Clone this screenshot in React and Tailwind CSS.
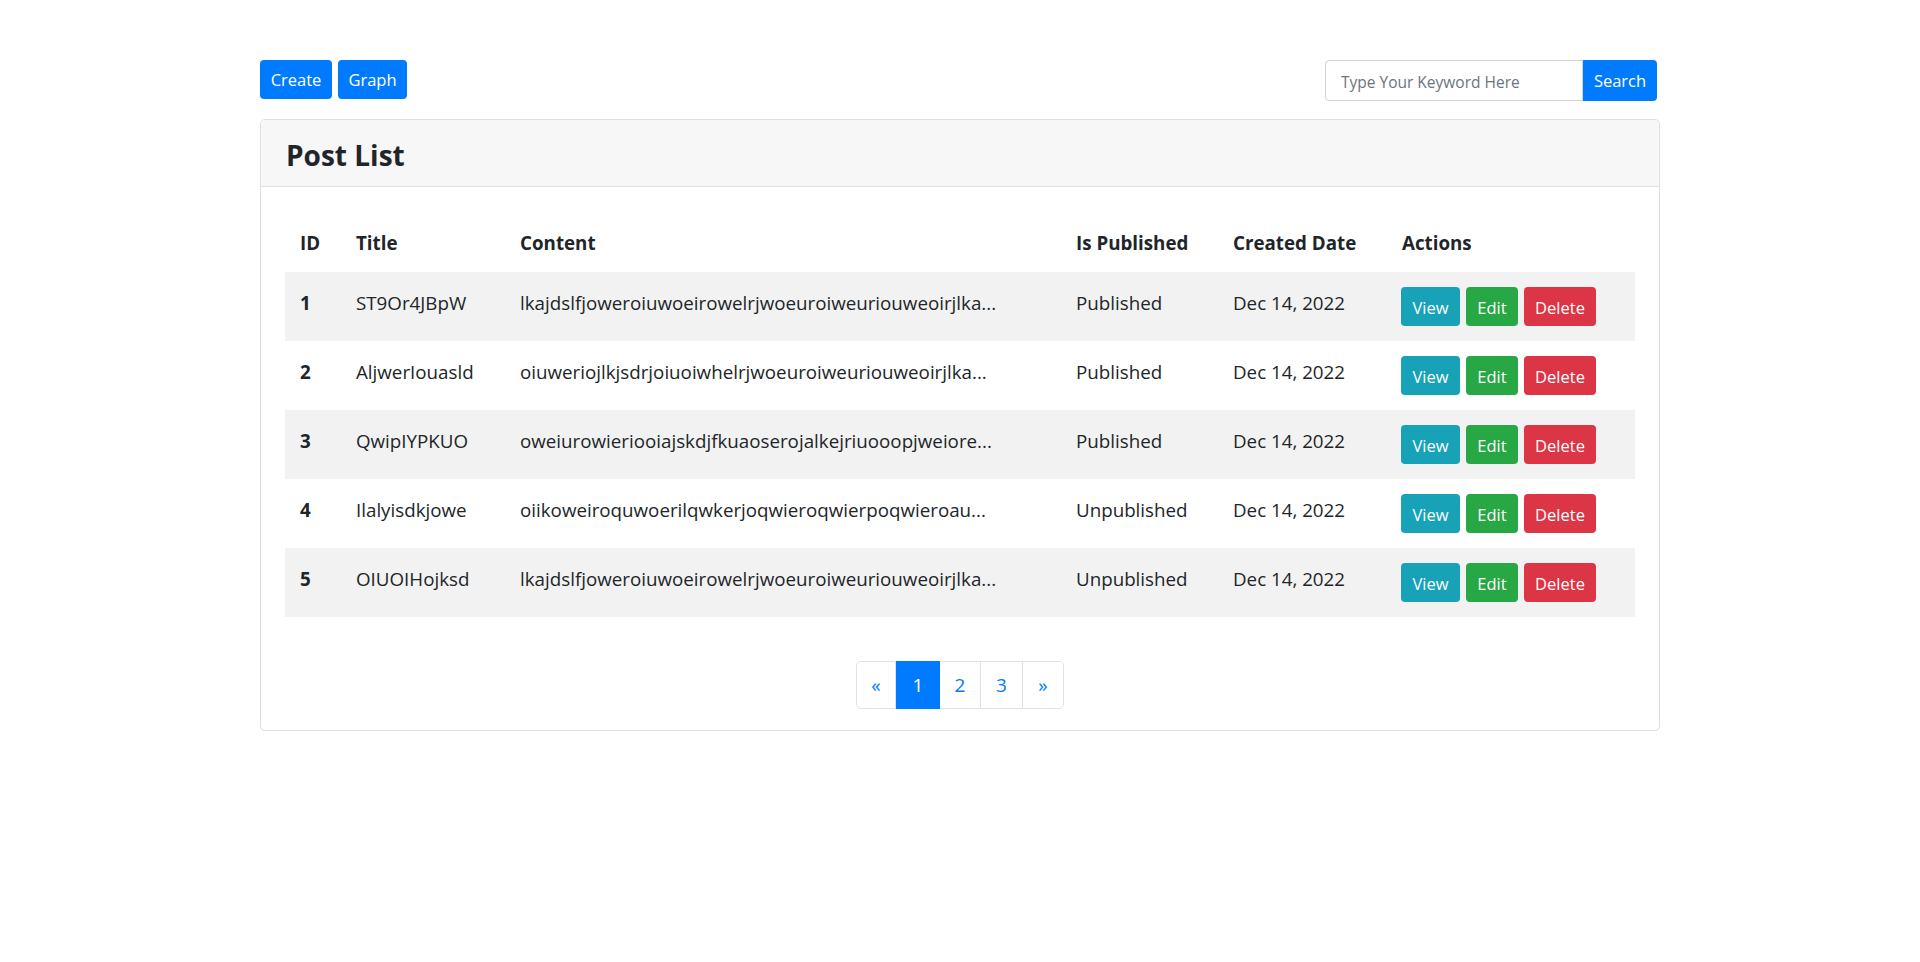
export default function App() {
  const rows = [
    { id: 1, title: "ST9Or4JBpW", content: "lkajdslfjoweroiuwoeirowelrjwoeuroiweuriouweoirjlka...", pub: "Published" },
    { id: 2, title: "AljwerIouasld", content: "oiuweriojlkjsdrjoiuoiwhelrjwoeuroiweuriouweoirjlka...", pub: "Published" },
    { id: 3, title: "QwipIYPKUO", content: "oweiurowieriooiajskdjfkuaoserojalkejriuooopjweiore...", pub: "Published" },
    { id: 4, title: "Ilalyisdkjowe", content: "oiikoweiroquwoerilqwkerjoqwieroqwierpoqwieroau...", pub: "Unpublished" },
    { id: 5, title: "OIUOIHojksd", content: "lkajdslfjoweroiuwoeirowelrjwoeuroiweuriouweoirjlka...", pub: "Unpublished" },
  ];
  const th = "text-left font-bold px-[15px] pt-[16px] pb-[14px] align-top";
  const td = "px-[15px] pt-[16px] pb-[14px] align-top whitespace-nowrap";
  return (
    <div className="min-h-screen bg-white text-[#212529] font-['Open_Sans','Noto_Sans',sans-serif]">
      <div className="w-[1400px] mx-auto pt-[60px]">
        <div className="flex justify-between items-start">
          <div className="flex gap-[6px]">
            <button className="h-[39px] w-[72px] rounded-[4px] bg-[#007bff] text-white text-[16.5px] leading-[26px] pt-[1px]">Create</button>
            <button className="h-[39px] w-[69px] rounded-[4px] bg-[#007bff] text-white text-[16.5px] leading-[26px] pt-[1px]">Graph</button>
          </div>
          <div className="flex mr-[3px]">
            <input
              placeholder="Type Your Keyword Here"
              className="w-[258px] h-[41px] border border-[#ced4da] rounded-l-[4px] pl-[15px] pr-[10px] pt-[2px] text-[15.5px] placeholder:text-[#6c757d] outline-none"
            />
            <button className="w-[74px] h-[41px] rounded-r-[4px] bg-[#007bff] text-white text-[16.5px] pt-[1px]">Search</button>
          </div>
        </div>

        <div className="mt-[18px] border border-[#dfdfdf] rounded-[5px]">
          <div className="h-[67px] bg-[#f7f7f7] border-b border-[#dfdfdf] px-[25px] flex items-center rounded-t-[5px]">
            <h4 className="text-[28px] font-bold leading-[36px] pt-[3px]">Post List</h4>
          </div>
          <div className="px-[24px] pt-[25px] pb-[21px]">
            <table className="w-full table-fixed border-collapse text-[18.75px] leading-[30px]">
              <colgroup>
                <col className="w-[56px]" />
                <col className="w-[164px]" />
                <col className="w-[556px]" />
                <col className="w-[157px]" />
                <col className="w-[168px]" />
                <col />
              </colgroup>
              <thead>
                <tr>
                  <th className={th}>ID</th>
                  <th className={th}>Title</th>
                  <th className={th}>Content</th>
                  <th className={th}>Is Published</th>
                  <th className={th}>Created Date</th>
                  <th className={th + " pl-[16px]"}>Actions</th>
                </tr>
              </thead>
              <tbody>
                {rows.map((r, i) => (
                  <tr key={r.id} className={i % 2 === 0 ? "bg-[#f2f2f2]" : "bg-white"}>
                    <td className={td + " font-bold"}>{r.id}</td>
                    <td className={td}>{r.title}</td>
                    <td className={td}>{r.content}</td>
                    <td className={td}>{r.pub}</td>
                    <td className={td}>Dec 14, 2022</td>
                    <td className="p-[15px] align-top">
                      <div className="flex gap-[6px]">
                        <button className="h-[39px] w-[59px] rounded-[4px] bg-[#17a2b8] text-white text-[16.5px] leading-[26px] pt-[2px]">View</button>
                        <button className="h-[39px] w-[52px] rounded-[4px] bg-[#28a745] text-white text-[16.5px] leading-[26px] pt-[2px]">Edit</button>
                        <button className="h-[39px] w-[72px] rounded-[4px] bg-[#dc3545] text-white text-[16.5px] leading-[26px] pt-[2px]">Delete</button>
                      </div>
                    </td>
                  </tr>
                ))}
              </tbody>
            </table>

            <div className="flex justify-center mt-[44px]">
              <div className="flex h-[48px] text-[19px] text-[#007bff]">
                <span className="w-[40px] flex items-center justify-center border border-[#dee2e6] rounded-l-[5px]">«</span>
                <span className="w-[44px] flex items-center justify-center bg-[#007bff] border border-[#007bff] text-white">1</span>
                <span className="w-[41px] flex items-center justify-center border border-l-0 border-[#dee2e6]">2</span>
                <span className="w-[42px] flex items-center justify-center border border-l-0 border-[#dee2e6]">3</span>
                <span className="w-[41px] flex items-center justify-center border border-l-0 border-[#dee2e6] rounded-r-[5px]">»</span>
              </div>
            </div>
          </div>
        </div>
      </div>
    </div>
  );
}
